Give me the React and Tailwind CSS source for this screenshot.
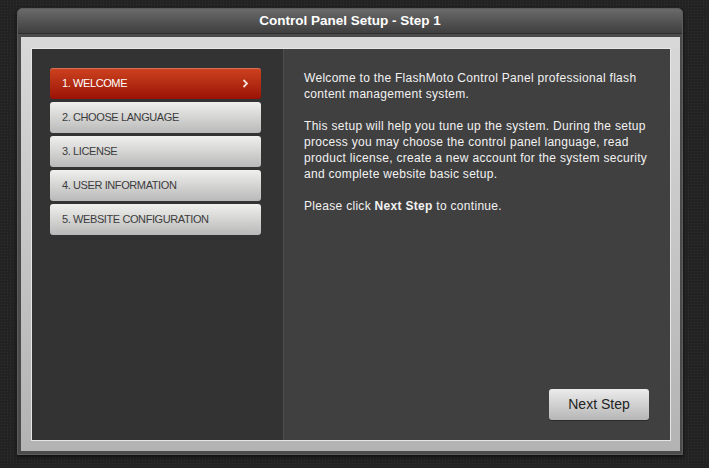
const steps = [
  '1. WELCOME',
  '2. CHOOSE LANGUAGE',
  '3. LICENSE',
  '4. USER INFORMATION',
  '5. WEBSITE CONFIGURATION',
];

function Chevron() {
  return (
    <svg width="7" height="9" viewBox="0 0 7 9" className="text-[#f3e0da]">
      <polyline points="1.5,1 5,4.5 1.5,8" fill="none" stroke="currentColor" strokeWidth="1.8" />
    </svg>
  );
}

export default function App() {
  return (
    <div
      className="w-[709px] h-[468px] bg-[#232323] bg-[radial-gradient(#2f2f2f_1px,transparent_1px)] bg-[length:3px_3px] pt-[8px] pl-[17px] overflow-hidden"
      style={{ fontFamily: 'Tahoma, "Liberation Sans", "DejaVu Sans", sans-serif' }}
    >
      <div className="w-[666px] h-[447px] flex flex-col rounded-t-[5px] bg-[#4b4b4b] border border-[#5c5c5c] shadow-[0_2px_4px_rgba(0,0,0,0.6)]">
        {/* Title bar */}
        <div className="h-[25px] shrink-0 flex items-center justify-center rounded-t-[4px] bg-gradient-to-b from-[#6a6a6a] to-[#3f3f3f] border-b border-[#2e2e2e]">
          <span className="text-white text-[13.5px] font-bold">Control Panel Setup - Step 1</span>
        </div>

        {/* Frame */}
        <div className="flex-1 min-h-0 pl-[3px] pr-[2px] pt-[3px] pb-[3px] flex">
          <div className="flex-1 min-w-0 pt-[11px] pb-[10px] pl-[10px] pr-[9px] bg-gradient-to-b from-[#d8d8d8] to-[#b3b3b3] flex">
            <div className="flex-1 min-w-0 flex border border-[#e6e6e6]">
              {/* Left steps */}
              <div className="w-[252px] shrink-0 bg-[#333333] border-r border-[#4d4d4d] pt-[19px] pl-[18px]">
                <div className="w-[211px] flex flex-col gap-[3px]">
                  {steps.map((s, i) =>
                    i === 0 ? (
                      <div
                        key={s}
                        className="h-[31px] rounded-[3px] bg-gradient-to-b from-[#cd421f] to-[#9b1005] shadow-[inset_0_1px_0_rgba(255,255,255,0.25)] flex items-center justify-between pl-[12px] pr-[12px]"
                      >
                        <span className="text-white text-[11px] tracking-[-0.4px]">{s}</span>
                        <Chevron />
                      </div>
                    ) : (
                      <div
                        key={s}
                        className="h-[31px] rounded-[3px] bg-gradient-to-b from-[#f0f0ee] to-[#b9b9b9] flex items-center pl-[12px]"
                      >
                        <span className="text-[#3c3c3c] text-[11px] tracking-[-0.4px]">{s}</span>
                      </div>
                    )
                  )}
                </div>
              </div>

              {/* Right content */}
              <div className="flex-1 min-w-0 bg-[#404040] flex flex-col justify-between pt-[21px] pl-[20px] pb-[20px]">
                <div className="w-[350px] text-[#f2f2f2] text-[12px] leading-[16px] tracking-[0.3px]">
                  <p>Welcome to the FlashMoto Control Panel professional flash content management system.</p>
                  <p className="mt-[16px]">
                    This setup will help you tune up the system. During the setup process you may choose the control
                    panel language, read product license, create a new account for the system security and complete
                    website basic setup.
                  </p>
                  <p className="mt-[16px]">
                    Please click <span className="font-bold">Next Step</span> to continue.
                  </p>
                </div>
                <div className="flex justify-end pr-[21px]">
                  <button className="w-[100px] h-[31px] rounded-[3px] bg-gradient-to-b from-[#ececec] to-[#b6b6b6] text-[#222] text-[14px] shadow-[0_1px_0_rgba(0,0,0,0.3)]">
                    Next Step
                  </button>
                </div>
              </div>
            </div>
          </div>
        </div>
      </div>
    </div>
  );
}
